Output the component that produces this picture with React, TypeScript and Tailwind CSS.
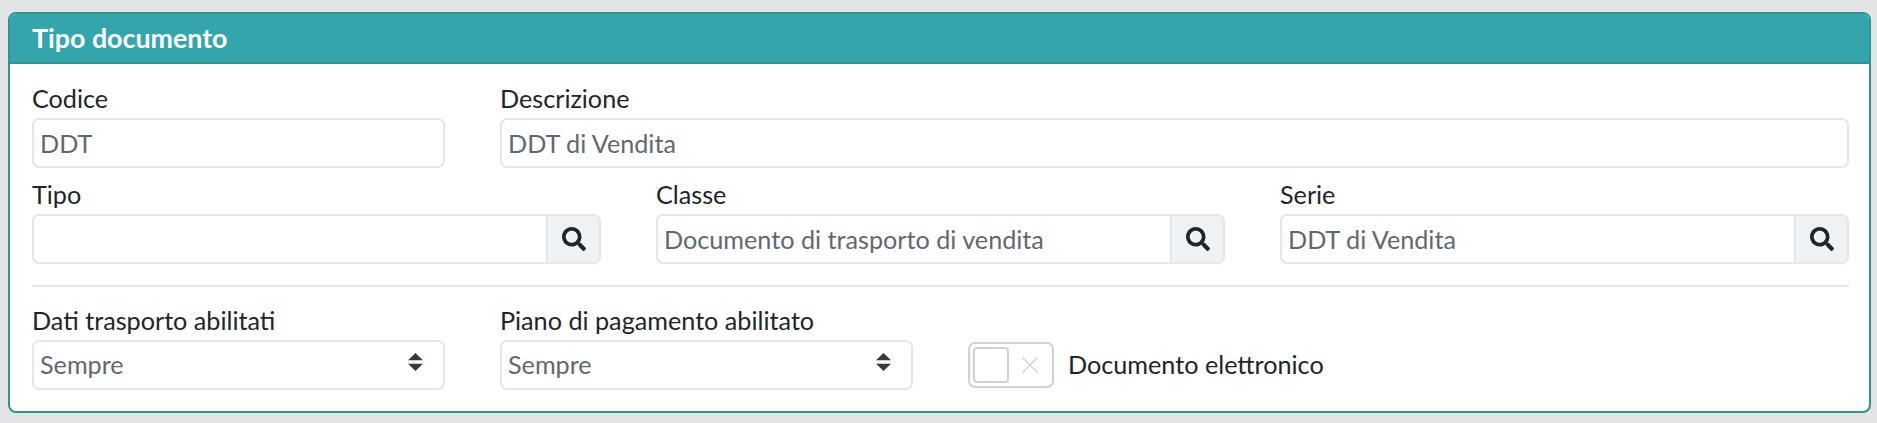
import { FaSearch } from "react-icons/fa";
import { X } from "lucide-react";

const labelCls = "block h-[34px] text-[25.2px] leading-[28px] text-[#212529]";
const inputCls =
  "h-[50px] w-full rounded-[7px] border-2 border-[#e4e7ea] bg-white px-[6px] text-[25.2px] text-[#5f6873] outline-none";

function Field({ label, value, className }: { label: string; value: string; className: string }) {
  return (
    <div className={className}>
      <label className={labelCls}>{label}</label>
      <input readOnly value={value} className={inputCls} />
    </div>
  );
}

function LookupField({ label, value }: { label: string; value: string }) {
  return (
    <div className="col-span-4">
      <label className={labelCls}>{label}</label>
      <div className="flex h-[50px]">
        <input
          readOnly
          value={value}
          className="h-full min-w-0 flex-1 rounded-l-[7px] border-2 border-r-0 border-[#e4e7ea] bg-white px-[6px] text-[25.2px] text-[#5f6873] outline-none"
        />
        <button className="flex h-full w-[55px] items-center justify-center rounded-r-[7px] border-2 border-[#e4e7ea] bg-[#eff2f5] text-[#212529]">
          <FaSearch size={24} />
        </button>
      </div>
    </div>
  );
}

function SelectField({ label }: { label: string }) {
  return (
    <div className="col-span-3">
      <label className={labelCls}>{label}</label>
      <div className="relative h-[50px]">
        <select className={`${inputCls} appearance-none`} defaultValue="Sempre">
          <option>Sempre</option>
        </select>
        <svg viewBox="0 0 4 5" className="pointer-events-none absolute right-[22px] top-[13px] h-[18px] w-[15px]" preserveAspectRatio="none">
          <path d="M2 0L0 2h4zm0 5L0 3h4z" fill="#343a40" />
        </svg>
      </div>
    </div>
  );
}

export default function App() {
  return (
    <div className="min-h-screen bg-[#e3e4e6] pb-[10px] pl-2 pr-1.5 pt-3 font-['Lato',sans-serif]">
      <div className="overflow-hidden rounded-[8px] border-2 border-[#319193] bg-white">
        <div className="flex h-[50px] items-center border-b-2 border-[#319193] bg-[#34a5ac] px-[22px] text-[26.8px] font-bold text-white">
          Tipo documento
        </div>
        <div className="pl-[22px] pr-[20px] pt-[20px]">
          <div className="grid grid-cols-12 gap-x-[55px]">
            <Field label="Codice" value="DDT" className="col-span-3" />
            <Field label="Descrizione" value="DDT di Vendita" className="col-span-9" />
          </div>
          <div className="mt-[12px] grid grid-cols-12 gap-x-[55px]">
            <LookupField label="Tipo" value="" />
            <LookupField label="Classe" value="Documento di trasporto di vendita" />
            <LookupField label="Serie" value="DDT di Vendita" />
          </div>
          <hr className="mt-[21px] border-t-2 border-[#e6e7e8]" />
          <div className="mt-[19px] grid grid-cols-12 gap-x-[55px] pb-[21px]">
            <SelectField label="Dati trasporto abilitati" />
            <SelectField label="Piano di pagamento abilitato" />
            <div className="col-span-6 flex items-center gap-[14px] pt-[34px]">
              <div className="flex h-[46px] w-[86px] items-center justify-between rounded-[7px] border-2 border-[#ced2d6] pl-[3px] pr-[8px]">
                <div className="h-[36px] w-[36px] rounded-[4px] border-2 border-[#ced2d6]" />
                <X size={28} strokeWidth={1.3} className="text-[#ced4da]" />
              </div>
              <span className="text-[25.2px] text-[#212529]">Documento elettronico</span>
            </div>
          </div>
        </div>
      </div>
    </div>
  );
}
